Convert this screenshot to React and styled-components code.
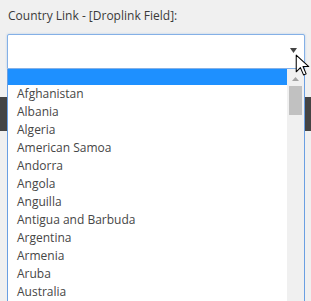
import React from 'react';
import styled, { createGlobalStyle } from 'styled-components';

const GlobalStyle = createGlobalStyle`
  html, body {
    margin: 0;
    padding: 0;
    background: #f0f0f0;
    overflow: hidden;
  }
  body {
    font-family: "Open Sans", "Liberation Sans", sans-serif;
  }
`;

const Page = styled.div`
  width: 311px;
  height: 301px;
  position: relative;
  overflow: hidden;
`;

const Field = styled.div`
  padding: 8px 6px 0 7px;
`;

const Label = styled.div`
  font-size: 12px;
  line-height: 16px;
  color: #3a3a3a;
  padding-left: 1px;
  margin-bottom: 10px;
`;

const SelectWrap = styled.div`
  position: relative;
`;

const SelectBox = styled.div`
  height: 35px;
  box-sizing: border-box;
  background: #fff;
  border: 1px solid #84b0e6;
  border-radius: 2px 2px 0 0;
  box-shadow: 0 0 2px rgba(102, 160, 230, 0.5);
  position: relative;
`;

const Caret = styled.svg`
  position: absolute;
  right: 7px;
  top: 13px;
`;

const DarkBar = styled.div`
  height: 34px;
  margin-top: 28px;
  background: #444444;
`;

const Dropdown = styled.div`
  position: absolute;
  left: 0;
  right: 0;
  top: 35px;
  height: 232px;
  background: #fff;
  border-left: 1px solid #6a9fe2;
  border-right: 1px solid #6a9fe2;
  display: flex;
  z-index: 2;
`;

const Options = styled.div`
  flex: 1;
  overflow: hidden;
`;

const Option = styled.div`
  height: ${p => (p.$empty ? '16px' : '18px')};
  line-height: 18px;
  padding-left: 9px;
  font-size: 12px;
  color: #464646;
  white-space: nowrap;
  background: ${p => (p.$active ? '#1e90ff' : 'transparent')};
`;

const Scrollbar = styled.div`
  width: 17px;
  background: #f0f0f0;
  display: flex;
  flex-direction: column;
  align-items: center;
`;

const ScrollArrow = styled.svg`
  margin-top: 8px;
`;

const Thumb = styled.div`
  width: 13px;
  height: 29px;
  margin-top: 5px;
  background: #c1c1c1;
`;

const Cursor = styled.svg`
  position: absolute;
  left: 295px;
  top: 54px;
  z-index: 5;
`;

const countries = [
  'Afghanistan',
  'Albania',
  'Algeria',
  'American Samoa',
  'Andorra',
  'Angola',
  'Anguilla',
  'Antigua and Barbuda',
  'Argentina',
  'Armenia',
  'Aruba',
  'Australia',
];

const App = () => {
  return (
    <Page>
      <GlobalStyle />
      <Field>
        <Label>Country Link - [Droplink Field]:</Label>
        <SelectWrap>
          <SelectBox>
            <Caret width="7" height="5" viewBox="0 0 7 5">
              <path d="M0 0 H7 L3.5 5 Z" fill="#444" />
            </Caret>
          </SelectBox>
          <Dropdown>
            <Options>
              <Option $active $empty />
              {countries.map(c => (
                <Option key={c}>{c}</Option>
              ))}
            </Options>
            <Scrollbar>
              <ScrollArrow width="7" height="4" viewBox="0 0 7 4">
                <path d="M0 4 H7 L3.5 0 Z" fill="#a3a3a3" />
              </ScrollArrow>
              <Thumb />
            </Scrollbar>
          </Dropdown>
        </SelectWrap>
      </Field>
      <DarkBar />
      <Cursor width="15" height="23" viewBox="0 0 14 22">
        <path
          d="M1 1 L1 17 L5 13 L8 20 L10.5 19 L7.5 12 L13 12 Z"
          fill="#fff"
          stroke="#000"
          strokeWidth="1"
          strokeLinejoin="round"
        />
      </Cursor>
    </Page>
  );
};

export default App;
